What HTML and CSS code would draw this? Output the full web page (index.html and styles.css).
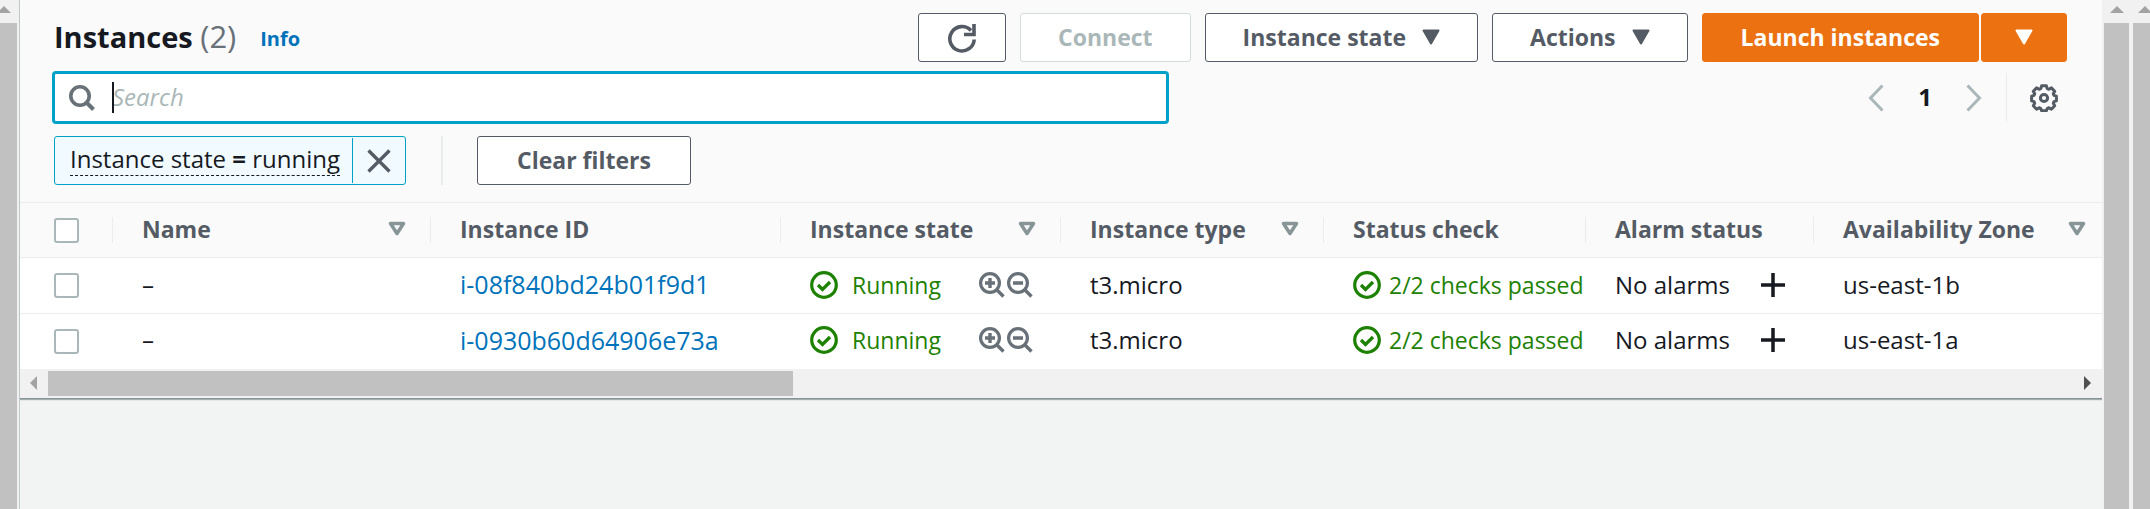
FILE: index.html
```html
<!DOCTYPE html>
<html lang="en">
<head>
<meta charset="utf-8">
<title>Instances</title>
<link rel="stylesheet" href="styles.css">
</head>
<body>
<svg class="defs" aria-hidden="true">
  <symbol id="check" viewBox="0 0 28 28"><circle cx="14" cy="14" r="12.3" fill="none" stroke="currentColor" stroke-width="3.2"/><path d="M8 14l4.500 4.500 7.500-7.500" fill="none" stroke="currentColor" stroke-width="3.300"/></symbol>
  <symbol id="zoom-in" viewBox="0 0 26 26"><circle cx="11" cy="11" r="9.400" fill="none" stroke="currentColor" stroke-width="3.200"/><path d="M17.500 17.500l7 7M6 11h10M11 6v10" fill="none" stroke="currentColor" stroke-width="3.400"/></symbol>
  <symbol id="zoom-out" viewBox="0 0 26 26"><circle cx="11" cy="11" r="9.400" fill="none" stroke="currentColor" stroke-width="3.200"/><path d="M17.500 17.500l7 7M6 11h10" fill="none" stroke="currentColor" stroke-width="3.400"/></symbol>
  <symbol id="plus" viewBox="0 0 26 26"><path d="M13 1v24M1 13h24" fill="none" stroke="currentColor" stroke-width="3.500"/></symbol>
  <symbol id="sort" viewBox="0 0 18 16"><path d="M2.500 2.500h13L9 12.500z" fill="none" stroke="currentColor" stroke-width="3.500" stroke-linejoin="round"/></symbol>
  <symbol id="caret" viewBox="0 0 18 16"><path d="M1.500 1.500h15L9 14.500z" fill="currentColor" stroke="currentColor" stroke-width="2" stroke-linejoin="round"/></symbol>
</svg>
<div class="page">
  <div class="vbar vbar-left"><i class="up"></i><div class="vthumb"></div></div>
  <main class="content">
    <section class="panel">
      <header class="head">
        <div class="title-row">
          <h1 class="title">Instances <span class="count">(2)</span></h1>
          <a class="info" href="#info">Info</a>
          <div class="actions">
            <button class="btn refresh" aria-label="Refresh"><svg width="30" height="30" viewBox="0 0 30 30"><path d="M27.200 16.500A12.200 12.200 0 1 1 24 7.500" fill="none" stroke="currentColor" stroke-width="3.600"/><path d="M27 1v10.500H17" fill="none" stroke="currentColor" stroke-width="3.600"/></svg></button>
            <button class="btn" disabled>Connect</button>
            <button class="btn">Instance state <svg class="caret"><use href="#caret"/></svg></button>
            <button class="btn">Actions <svg class="caret"><use href="#caret"/></svg></button>
            <div class="split">
              <button class="btn primary">Launch instances</button>
              <button class="btn primary more" aria-label="More launch options"><svg class="caret"><use href="#caret"/></svg></button>
            </div>
          </div>
        </div>
        <div class="search-row">
          <label class="search">
            <svg width="26" height="26" viewBox="0 0 26 26"><circle cx="11" cy="11" r="9.200" fill="none" stroke="currentColor" stroke-width="3.600"/><path d="M17.500 17.500l7 7" stroke="currentColor" stroke-width="4"/></svg>
            <span class="text-cursor"></span>
            <input type="text" placeholder="Search" aria-label="Search">
          </label>
          <nav class="pager">
            <button class="plain" aria-label="Previous page"><svg width="16" height="28" viewBox="0 0 16 28"><path d="M14.500 1.500L2.500 14l12 12.500" fill="none" stroke="currentColor" stroke-width="3"/></svg></button>
            <button class="plain current">1</button>
            <button class="plain" aria-label="Next page"><svg width="16" height="28" viewBox="0 0 16 28"><path d="M1.500 1.500L13.500 14l-12 12.500" fill="none" stroke="currentColor" stroke-width="3"/></svg></button>
            <button class="plain settings" aria-label="Preferences"><svg width="28" height="28" viewBox="0 0 28 28" fill="none" stroke="currentColor" stroke-width="3" stroke-linejoin="round"><path d="M11.600 1.800h4.800l.8 2.800 1.700.7 2.500-1.400 3.300 3.300-1.400 2.600.7 1.600 2.400.8v4.600l-2.400.8-.7 1.700 1.400 2.500-3.300 3.400-2.500-1.500-1.700.8-.8 2.200h-4.800l-.8-2.200-1.700-.8-2.500 1.500-3.300-3.400 1.400-2.500-.7-1.700-2.400-.8v-4.600l2.400-.8.7-1.600-1.400-2.600 3.300-3.300 2.500 1.400 1.700-.7z"/><circle cx="14" cy="14" r="3.600"/></svg></button>
          </nav>
        </div>
        <div class="filter-row">
          <div class="token">
            <button class="token-text"><span>Instance state <b>=</b> running</span></button>
            <button class="token-x" aria-label="Remove filter"><svg width="24" height="24" viewBox="0 0 24 24"><path d="M1.500 1.500l21 21M22.500 1.500l-21 21" stroke="currentColor" stroke-width="3.300"/></svg></button>
          </div>
          <div class="filter-clear"><button class="btn">Clear filters</button></div>
        </div>
      </header>
      <div class="table-wrap">
        <table>
          <colgroup><col class="c-check"><col class="c-name"><col class="c-id"><col class="c-state"><col class="c-type"><col class="c-status"><col class="c-alarm"><col></colgroup>
          <thead>
            <tr>
              <th><input type="checkbox" aria-label="Select all"></th>
              <th><div class="th">Name <svg class="sort"><use href="#sort"/></svg></div></th>
              <th><div class="th">Instance ID</div></th>
              <th><div class="th">Instance state <svg class="sort"><use href="#sort"/></svg></div></th>
              <th><div class="th">Instance type <svg class="sort"><use href="#sort"/></svg></div></th>
              <th><div class="th">Status check</div></th>
              <th><div class="th">Alarm status</div></th>
              <th><div class="th">Availability Zone <svg class="sort"><use href="#sort"/></svg></div></th>
            </tr>
          </thead>
          <tbody>
            <tr>
              <td><input type="checkbox" aria-label="Select i-08f840bd24b01f9d1"></td>
              <td>–</td>
              <td><a class="id" href="#i-08f840bd24b01f9d1">i-08f840bd24b01f9d1</a></td>
              <td><div class="cell"><span class="ok state"><svg class="check"><use href="#check"/></svg>Running</span><button class="plain zoom" aria-label="Include"><svg><use href="#zoom-in"/></svg></button><button class="plain zoom" aria-label="Exclude"><svg><use href="#zoom-out"/></svg></button></div></td>
              <td>t3.micro</td>
              <td><div class="cell ok"><svg class="check"><use href="#check"/></svg>2/2 checks passed</div></td>
              <td><div class="cell alarm">No alarms<button class="plain add" aria-label="Add alarm"><svg><use href="#plus"/></svg></button></div></td>
              <td>us-east-1b</td>
            </tr>
            <tr>
              <td><input type="checkbox" aria-label="Select i-0930b60d64906e73a"></td>
              <td>–</td>
              <td><a class="id" href="#i-0930b60d64906e73a">i-0930b60d64906e73a</a></td>
              <td><div class="cell"><span class="ok state"><svg class="check"><use href="#check"/></svg>Running</span><button class="plain zoom" aria-label="Include"><svg><use href="#zoom-in"/></svg></button><button class="plain zoom" aria-label="Exclude"><svg><use href="#zoom-out"/></svg></button></div></td>
              <td>t3.micro</td>
              <td><div class="cell ok"><svg class="check"><use href="#check"/></svg>2/2 checks passed</div></td>
              <td><div class="cell alarm">No alarms<button class="plain add" aria-label="Add alarm"><svg><use href="#plus"/></svg></button></div></td>
              <td>us-east-1a</td>
            </tr>
          </tbody>
        </table>
      </div>
      <div class="hbar"><i class="left"></i><div class="htrack"><div class="hthumb"></div></div><i class="right"></i></div>
    </section>
  </main>
  <div class="vbar vbar-inner"><i class="up"></i><div class="vthumb"></div></div>
  <div class="vbar vbar-outer"><i class="up"></i><div class="vthumb"></div></div>
</div>
</body>
</html>
```
FILE: styles.css
```css
* { box-sizing: border-box; }
body {
  margin: 0;
  overflow: hidden;
  background: #f2f3f3;
  color: #16191f;
  font: 24px/32px "Open Sans", "Noto Sans", sans-serif;
}
svg { display: block; flex: none; }
.defs { position: absolute; width: 0; height: 0; }
button, input { font: inherit; color: inherit; margin: 0; }
a { color: #0073bb; text-decoration: none; }

.page { display: flex; height: 100vh; }
.content { flex: 1; min-width: 0; }

/* scroll bars */
.vbar { display: flex; flex-direction: column; flex: none; background: #f1f1f1; padding-top: 6px; }
.vbar .up { border: solid transparent; border-width: 0 7px 7px; border-bottom-color: #a3a3a3; margin-bottom: 10px; align-self: center; }
.vthumb { flex: 1; background: #c1c1c1; width: 100%; }
.vbar-left { width: 20px; padding-right: 2px; border-right: 1px solid #c4cccc; }
.vbar-left .up { align-self: flex-start; margin-left: -3px; }
.vbar-inner { width: 29px; padding-left: 2px; padding-right: 2px; }
.vbar-outer { width: 19px; padding-left: 2px; }
.vbar-outer .up { align-self: flex-start; margin-left: 5px; }
.hbar { display: flex; align-items: center; height: 29px; background: #f1f1f1; padding: 0 11px 0 10px; }
.hbar i { border: solid transparent; }
.hbar .left { border-width: 7px 7px 7px 0; border-right-color: #a3a3a3; }
.hbar .right { border-width: 7px 0 7px 7px; border-left-color: #505050; }
.htrack { flex: 1; margin: 0 11px; }
.hthumb { width: 36.8%; height: 25px; background: #c1c1c1; }

.panel { background: #fafafa; border-bottom: 1px solid #879596; box-shadow: 0 1px 1px #a3afaf; }
.head { padding: 13px 35px 17px 34px; }
.title-row, .search-row, .filter-row, .actions, .split, .pager, .token { display: flex; align-items: center; }
.title { margin: 0; padding-bottom: 2px; font-size: 29px; line-height: 46px; font-weight: 700; }
.count { font-size: 31px; font-weight: 400; color: #687078; }
.info { margin-left: 24px; font-size: 20px; font-weight: 700; padding-top: 3px; }
.actions { margin-left: auto; gap: 14px; }
.split { gap: 2px; }

.btn {
  display: flex; align-items: center; justify-content: center; gap: 16px;
  height: 49px; padding: 0 37px 2px;
  background: #fff; color: #545b64;
  border: 1px solid #545b64; border-radius: 3px;
  font-size: 23px; font-weight: 700; white-space: nowrap;
}
.btn:disabled { color: #aab7b8; border-color: #d5dbdb; }
.btn.refresh { padding: 0 28px; }
.btn.primary { padding: 0 38px 2px; background: #ec7211; border-color: #ec7211; color: #fff; }
.btn.more { padding: 0 33px 2px; }
.caret { width: 18px; height: 16px; }
.plain { border: 0; background: none; padding: 0; }

.search-row { justify-content: space-between; margin-top: 9px; }
.search {
  position: relative; display: flex; align-items: center; gap: 17px;
  width: 1117px; height: 53px; margin-left: -2px; padding: 0 14px;
  background: #fff; border: 3px solid #00a1c9; border-radius: 4px; color: #687078;
}
.search input { flex: 1; min-width: 0; border: 0; padding: 0 0 2px; background: none; outline: 0; color: #16191f; }
.search input::placeholder { color: #aab7b8; font-style: italic; opacity: 1; }
.text-cursor { position: absolute; left: 57px; top: 8px; width: 2px; height: 31px; background: #16191f; }
.pager { color: #aab7b8; }
.plain.current { width: 82px; padding-bottom: 2px; font-weight: 700; color: #16191f; }
.plain.settings { display: flex; align-items: center; height: 49px; margin-left: 24px; padding: 0 9px 0 23px; border-left: 1px solid #eaeded; color: #545b64; }

.filter-row { margin-top: 12px; }
.token { height: 49px; background: #f1faff; border: 1px solid #00a1c9; border-radius: 3px; }
.token button { border: 0; background: none; }
.token-text { padding: 0 12px 0 15px; }
.token-text span { display: block; line-height: 28px; padding-bottom: 2px; border-bottom: 1px dashed #16191f; }
.token-x { display: flex; align-items: center; height: 45px; padding: 0 14px; color: #545b64; }
.token .token-x { border-left: 1px solid #00a1c9; }
.filter-clear { margin-left: 35px; padding-left: 34px; border-left: 2px solid #eaeded; }
.filter-clear .btn { padding: 0 39px 2px; }

.table-wrap { overflow: hidden; }
table { width: 100%; min-width: 2090px; table-layout: fixed; border-collapse: collapse; }
.c-check { width: 92px; }
.c-name { width: 318px; }
.c-id { width: 350px; }
.c-state { width: 280px; }
.c-type { width: 263px; }
.c-status { width: 262px; }
.c-alarm { width: 228px; }
th, td { padding: 0 0 2px 30px; height: 56px; text-align: left; white-space: nowrap; overflow: hidden; border-top: 1px solid #eaeded; }
th { height: 55px; padding: 0; color: #545b64; font-size: 23px; font-weight: 700; }
thead tr { background: #fafafa; }
tbody tr { background: #fff; }
tbody tr:last-child td { height: 55px; }
th:first-child, td:first-child { padding: 0 0 0 34px; }
.th { display: flex; align-items: center; justify-content: space-between; height: 26px; padding: 0 24px 2px 29px; border-left: 1px solid #eaeded; }
.sort { width: 18px; height: 16px; color: #879596; }
input[type="checkbox"] { appearance: none; display: block; width: 25px; height: 25px; background: #fff; border: 2px solid #aab7b8; border-radius: 3px; }
.id { font-size: 25px; }
.cell { display: flex; align-items: center; gap: 8px; }
.ok { color: #1d8102; font-size: 23px; }
.check { width: 28px; height: 28px; }
.state { display: flex; align-items: center; gap: 14px; width: 161px; }
.cell .zoom { color: #687078; }
.zoom + .zoom { margin-left: -6px; }
.zoom svg, .add svg { width: 26px; height: 26px; }
.alarm { justify-content: space-between; padding-right: 27px; }
```
